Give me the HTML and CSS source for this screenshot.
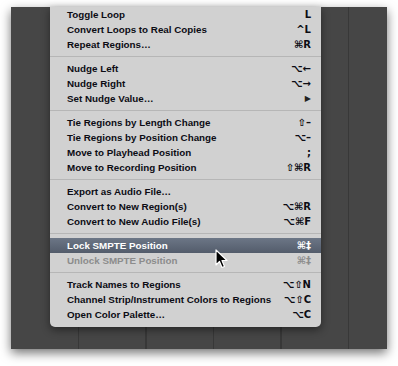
FILE: index.html
```html
<!DOCTYPE html>
<html lang="en">
<head>
    <meta charset="UTF-8">
    <title>Region Menu</title>
    <link rel="stylesheet" href="styles.css">
</head>
<body>
    <div class="window">
        <div class="menu">
            <div class="item"><span>Toggle Loop</span><span class="key">L</span></div>
            <div class="item"><span>Convert Loops to Real Copies</span><span class="key">^L</span></div>
            <div class="item"><span>Repeat Regions…</span><span class="key">⌘R</span></div>
            <div class="sep"></div>
            <div class="item"><span>Nudge Left</span><span class="key">⌥←</span></div>
            <div class="item"><span>Nudge Right</span><span class="key">⌥→</span></div>
            <div class="item"><span>Set Nudge Value…</span><span class="key arrow">▶</span></div>
            <div class="sep"></div>
            <div class="item"><span>Tie Regions by Length Change</span><span class="key">⇧–</span></div>
            <div class="item"><span>Tie Regions by Position Change</span><span class="key">⌥–</span></div>
            <div class="item"><span>Move to Playhead Position</span><span class="key">;</span></div>
            <div class="item"><span>Move to Recording Position</span><span class="key">⇧⌘R</span></div>
            <div class="sep"></div>
            <div class="item"><span>Export as Audio File…</span><span class="key"></span></div>
            <div class="item"><span>Convert to New Region(s)</span><span class="key">⌥⌘R</span></div>
            <div class="item"><span>Convert to New Audio File(s)</span><span class="key">⌥⌘F</span></div>
            <div class="sep"></div>
            <div class="item selected"><span>Lock SMPTE Position</span><span class="key">⌘‡</span></div>
            <div class="item disabled"><span>Unlock SMPTE Position</span><span class="key">⌘‡</span></div>
            <div class="sep"></div>
            <div class="item"><span>Track Names to Regions</span><span class="key">⌥⇧N</span></div>
            <div class="item"><span>Channel Strip/Instrument Colors to Regions</span><span class="key">⌥⇧C</span></div>
            <div class="item"><span>Open Color Palette…</span><span class="key">⌥C</span></div>
        </div>
        <svg class="cursor" width="14" height="20" viewBox="0 0 14 20">
            <path d="M1 1 L1 16 L4.5 12.5 L7 18.5 L9.5 17.5 L7 11.5 L12 11.5 Z" fill="#000" stroke="#fff" stroke-width="1.2" stroke-linejoin="round"/>
        </svg>
    </div>
</body>
</html>
```

FILE: styles.css
```css
* {
    margin: 0;
    padding: 0;
    box-sizing: border-box;
}
body {
    background-color: #fff;
    padding: 7px 11px 17px 11px;
    font-family: "Liberation Sans", Arial, sans-serif;
}
.window {
    position: relative;
    width: 376px;
    height: 342px;
    padding-left: 39px;
    background-color: #464646;
    background-image: repeating-linear-gradient(90deg, transparent 0, transparent 66px, #383838 66px, #383838 67.5px);
    background-position: 1px 0;
    box-shadow: 0 4px 10px rgba(0, 0, 0, 0.55);
}
.menu {
    width: 271px;
    padding-bottom: 5px;
    background-color: #d1d1d1;
    border-radius: 0 0 5px 5px;
    box-shadow: 0 3px 8px rgba(0, 0, 0, 0.45);
}
.item {
    display: flex;
    justify-content: space-between;
    align-items: center;
    height: 15px;
    padding: 0 10px 0 17px;
    font-size: 9.8px;
    font-weight: bold;
    color: #0c0c14;
    white-space: nowrap;
}
.key {
    font-family: "DejaVu Sans", sans-serif;
    font-size: 10px;
    font-weight: bold;
}
.arrow {
    font-size: 8px;
    color: #222;
}
.sep {
    height: 9px;
    display: flex;
    align-items: center;
}
.sep::after {
    content: "";
    display: block;
    width: 100%;
    height: 1px;
    background-color: #b6b6b6;
}
.selected {
    background: linear-gradient(#6c7686, #535c6b);
    color: #fff;
}
.disabled {
    color: #8c8c8c;
}
.cursor {
    position: absolute;
    left: 204px;
    top: 242px;
}
```
